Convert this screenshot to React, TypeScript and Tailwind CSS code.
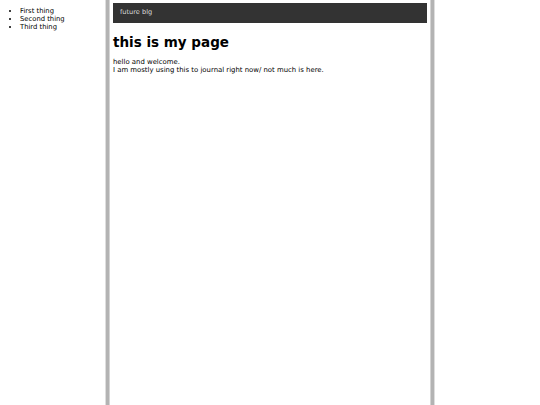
export default function App() {
  return (
    <div
      className="grid grid-cols-[1fr_328px_1fr] min-h-[405px] bg-white text-black"
      style={{ fontFamily: '"DejaVu Sans", Verdana, sans-serif' }}
    >
      <div>
        <ul className="list-disc pl-[20px] mt-[7px] text-[6.8px] leading-[8px]">
          <li>First thing</li>
          <li>Second thing</li>
          <li>Third thing</li>
        </ul>
      </div>

      <main className="border-x-[3px] border-[#b3b3b3] px-[4px] pt-[3px] shadow-[-1px_0_0_#dedede,1px_0_0_#dedede,inset_1px_0_0_#d4d4d4,inset_-1px_0_0_#d4d4d4]">
        <div className="bg-[#333333] h-[20px] px-[7px] flex items-center text-[6.6px] text-[#dddddd]">
          future blg
        </div>
        <h1 className="mt-[10px] text-[13.5px] leading-[18px] font-bold">this is my page</h1>
        <p className="mt-[7px] text-[6.9px] leading-[8px]">
          hello and welcome.
          <br />
          I am mostly using this to journal right now/ not much is here.
        </p>
      </main>

      <div />
    </div>
  );
}
